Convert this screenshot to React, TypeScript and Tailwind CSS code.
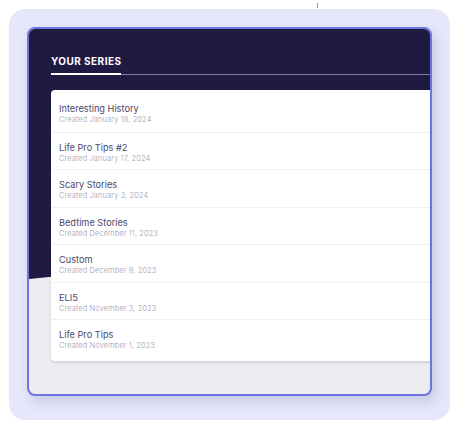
const series = [
  { name: "Interesting History", created: "Created January 18, 2024" },
  { name: "Life Pro Tips #2", created: "Created January 17, 2024" },
  { name: "Scary Stories", created: "Created January 3, 2024" },
  { name: "Bedtime Stories", created: "Created December 11, 2023" },
  { name: "Custom", created: "Created December 9, 2023" },
  { name: "ELI5", created: "Created November 3, 2023" },
  { name: "Life Pro Tips", created: "Created November 1, 2023" },
];

export default function App() {
  return (
    <div className="relative h-[434px] w-[463px] overflow-hidden bg-white p-[9px] font-['Inter','Noto_Sans',sans-serif]">
      <div className="absolute left-[317px] top-[3px] h-[5px] w-px bg-[#9a9aa6]" />

      <div className="h-[411px] w-[441px] rounded-2xl bg-[#e7e7fb] px-[18px] pt-[18px]">
        <div className="relative h-[369px] overflow-hidden rounded-lg border-2 border-[#6d74e2] bg-[#edecf0] shadow-[4px_6px_12px_rgba(60,60,120,0.18)]">
          <div className="absolute inset-x-0 top-0 h-[250px] bg-[#1f1a41] [clip-path:polygon(0_0,100%_0,100%_84%,0_100%)]" />

          <div className="relative pl-[22px] pt-[25px]">
            <div className="flex border-b border-[#7f7b9f]">
              <span className="-mb-px inline-block border-b-2 border-white pb-[5px] text-[10px] leading-[14px] font-bold tracking-[0.45px] text-white">
                YOUR SERIES
              </span>
            </div>

            <div className="mt-[15px] w-[420px] rounded-sm bg-white py-1 shadow-[0_2px_3px_rgba(0,0,0,0.12)]">
              {series.map((item, i) => (
                <div
                  key={item.name}
                  className={
                    i === 0
                      ? "h-[37.5px] px-2 pt-[9px]"
                      : "h-[37.5px] border-t border-[#f0f0f4] px-2 pt-[9px]"
                  }
                >
                  <p className="text-[9.2px] leading-[12px] font-normal text-[#4a4868]">{item.name}</p>
                  <p className="text-[7.4px] leading-[10px] font-light tracking-[0.15px] text-[#9e9db1]">{item.created}</p>
                </div>
              ))}
            </div>
          </div>
        </div>
      </div>
    </div>
  );
}
